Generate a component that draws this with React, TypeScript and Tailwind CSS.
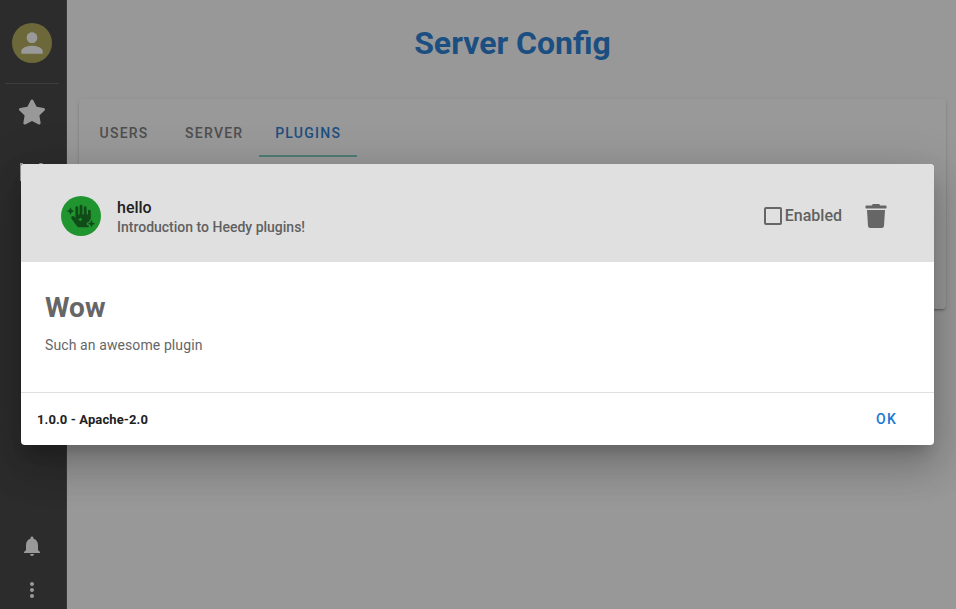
import React from "react";
import { FaHandSparkles, FaStar, FaTrash } from "react-icons/fa";
import { MdMoreVert, MdNotifications, MdPerson } from "react-icons/md";

function Sidebar() {
  return (
    <aside className="flex w-[67px] shrink-0 flex-col items-center border-r border-[#4a4a4a] bg-[#363636] pr-0.5 pt-[23px] text-white">
      <div className="flex size-10 items-center justify-center rounded-full bg-[#ada54f]">
        <MdPerson size={32} />
      </div>
      <div className="mt-5 h-px w-[54px] bg-[#555]" />
      <FaStar size={28} className="mt-[14px]" />
      <svg width="24" height="20" viewBox="0 0 24 20" fill="currentColor" className="mt-[37px]">
        <path d="M0 0h3v15h21v3H0zM19.5 0h3v3l-5 8-6-3-4 5-2-2 5.500-7 6 3z" />
      </svg>
      <div className="mb-[7px] mt-auto flex flex-col gap-5">
        <MdNotifications size={24} />
        <MdMoreVert size={24} />
      </div>
    </aside>
  );
}

function ServerConfig() {
  return (
    <main className="flex-1 bg-[#fefefe] pl-3 pr-2.5 pt-[19px]">
      <h1 className="text-center text-[32px] font-bold leading-[48px] text-[#1976d2]">Server Config</h1>
      <section className="mt-8 h-[210px] rounded bg-white pl-1 pt-2.5 shadow-[0_3px_1px_-2px_rgba(0,0,0,.2),0_2px_2px_rgba(0,0,0,.14),0_1px_5px_rgba(0,0,0,.12)]">
        <nav className="flex h-12 pl-[0.5px] text-sm font-medium leading-[48px] tracking-[1.25px] text-[#757575]">
          <span className="px-4">USERS</span>
          <span className="ml-[4.5px] pl-4 pr-[15.75px]">SERVER</span>
          <span className="border-b-2 border-[#75cbbd] px-4 text-[#1976d2]">PLUGINS</span>
        </nav>
      </section>
    </main>
  );
}

function PluginDialog() {
  return (
    <div className="w-[913px] overflow-hidden rounded bg-white shadow-[0_11px_15px_-7px_rgba(0,0,0,.2),0_24px_38px_3px_rgba(0,0,0,.14),0_9px_46px_8px_rgba(0,0,0,.12)]">
      <header className="flex h-[98px] items-center bg-[#e0e0e0] pl-10 pr-[46px] pt-1.5">
        <div className="flex size-10 items-center justify-center rounded-full bg-[#20942f] text-[#114b18]">
          <FaHandSparkles size={28} />
        </div>
        <div className="ml-4 flex-1 pt-0.5">
          <div className="text-base font-medium leading-[19px] text-[#212121]">hello</div>
          <div className="text-sm font-medium leading-5 text-[#616161]">Introduction to Heedy plugins!</div>
        </div>
        <span className="size-[18px] rounded-[2px] border-2 border-[#666]" />
        <span className="ml-[3px] text-base font-medium text-[#616161]">Enabled</span>
        <FaTrash size={24} className="ml-[22px] text-[#666]" />
      </header>
      <div className="h-[130px] px-6 pt-[25px] text-[#666]">
        <h2 className="text-[28px] font-bold leading-[42px]">Wow</h2>
        <p className="mt-[5px] text-sm leading-[22px] tracking-[0.1px]">Such an awesome plugin</p>
      </div>
      <footer className="flex h-[53px] items-center justify-between border-t border-[#e0e0e0] pl-4 pr-[37px]">
        <span className="pt-px text-[13px] font-bold tracking-[0.1px] text-[#212121]">1.0.0 - Apache-2.0</span>
        <span className="text-sm font-medium tracking-[1.25px] text-[#1976d2]">OK</span>
      </footer>
    </div>
  );
}

export default function App() {
  return (
    <div className="relative flex h-[609px] w-[956px] overflow-hidden font-[Roboto,sans-serif]">
      <Sidebar />
      <ServerConfig />
      <div className="absolute inset-0 flex items-center justify-center bg-[#212121]/46 pr-px">
        <PluginDialog />
      </div>
    </div>
  );
}
